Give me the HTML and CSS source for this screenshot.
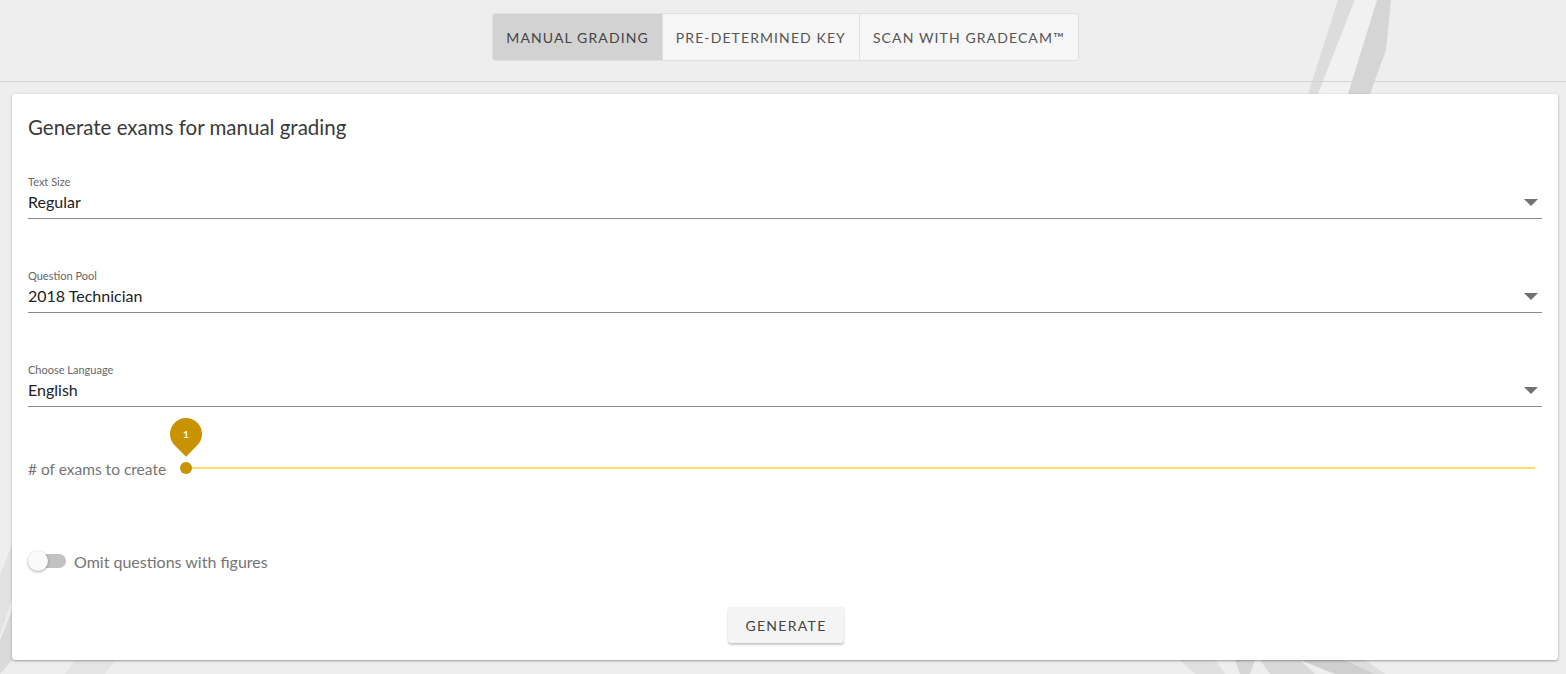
FILE: index.html
```html
<!DOCTYPE html>
<html>
<head>
<meta charset="utf-8">
<link rel="stylesheet" href="styles.css">
</head>
<body>
<svg class="bg-art" width="1566" height="674" viewBox="0 0 1566 674">
  <polygon points="1338,0 1355,0 1318,94 1308,94" fill="#dcdcdc"/>
  <polygon points="1355,0 1377,0 1348,94 1318,94" fill="#f1f1f1"/>
  <polygon points="1377,0 1391,0 1386,50 1370,94 1348,94" fill="#d5d5d5"/>
  <polygon points="1180,660 1215,660 1225,674 1195,674" fill="#e0e0e0"/>
  <polygon points="1235,660 1255,660 1250,674 1240,674" fill="#d6d6d6"/>
  <polygon points="1260,660 1300,660 1315,674 1270,674" fill="#d9d9d9"/>
  <polygon points="1300,660 1345,660 1375,674 1335,674" fill="#cfcfcf"/>
  <polygon points="1345,660 1365,660 1385,674 1375,674" fill="#dedede"/>
  <polygon points="0,575 12,545 12,600 0,635" fill="#e2e2e2"/>
  <polygon points="0,640 12,610 12,660 0,674" fill="#dadada"/>
  <polygon points="75,660 115,660 105,674 65,674" fill="#e4e4e4"/>
</svg>
<div class="page">
  <header class="header">
    <div class="tabs">
      <div class="tab active">Manual Grading</div>
      <div class="tab">Pre-Determined Key</div>
      <div class="tab">Scan with GradeCam™</div>
    </div>
  </header>
  <main class="card">
    <h1 class="title">Generate exams for manual grading</h1>

    <div class="field first">
      <div class="label">Text Size</div>
      <div class="select"><span class="value">Regular</span><span class="caret"></span></div>
    </div>
    <div class="field">
      <div class="label">Question Pool</div>
      <div class="select"><span class="value">2018 Technician</span><span class="caret"></span></div>
    </div>
    <div class="field">
      <div class="label">Choose Language</div>
      <div class="select"><span class="value">English</span><span class="caret"></span></div>
    </div>

    <div class="slider-row">
      <span class="slider-label"># of exams to create</span>
      <div class="slider">
        <div class="track"></div>
        <div class="thumb"></div>
        <div class="pin"><span>1</span></div>
      </div>
    </div>

    <div class="toggle-row">
      <div class="toggle"><div class="toggle-track"></div><div class="toggle-thumb"></div></div>
      <span class="toggle-label">Omit questions with figures</span>
    </div>

    <div class="actions">
      <button class="btn">Generate</button>
    </div>
  </main>
</div>
</body>
</html>
```

FILE: styles.css
```css
* { box-sizing: border-box; }
html, body { margin: 0; padding: 0; }
body {
  background: #eeeeee;
  font-family: Lato, "Open Sans", "Liberation Sans", sans-serif;
  color: #333;
  width: 1566px;
  height: 674px;
  overflow: hidden;
  position: relative;
}
.bg-art {
  position: absolute;
  left: 0;
  top: 0;
  z-index: 0;
}
.page {
  position: relative;
  z-index: 1;
}
.header {
  height: 82px;
  border-bottom: 1px solid #d4d4d4;
  display: flex;
  justify-content: center;
  padding-top: 13px;
}
.tabs {
  display: flex;
  height: 48px;
  border: 1px solid #e0e0e0;
  border-radius: 3px;
  background: #f6f6f6;
  overflow: hidden;
  margin-left: 5px;
}
.tab {
  display: flex;
  align-items: center;
  padding: 0 13px;
  font-size: 14px;
  letter-spacing: 1.1px;
  text-transform: uppercase;
  color: #555;
  border-left: 1px solid #e0e0e0;
}
.tab:first-child { border-left: none; }
.tab.active { background: #d2d2d2; color: #444; }

.card {
  margin: 12px 8px 0 12px;
  background: #fff;
  border-radius: 3px;
  box-shadow: 0 1px 3px rgba(0,0,0,0.25), 0 1px 1px rgba(0,0,0,0.12);
  padding: 21px 16px 16px 16px;
  height: 566px;
}
.title {
  margin: 0;
  font-size: 20.5px;
  font-weight: 400;
  line-height: 24px;
  color: #3a3a3a;
}
.field { margin-top: 50px; }
.field.first { margin-top: 36px; }
.label {
  font-size: 11px;
  line-height: 14px;
  color: #666;
}
.select {
  display: flex;
  justify-content: space-between;
  align-items: center;
  margin-top: 3px;
  height: 27px;
  padding-bottom: 6px;
  border-bottom: 1px solid #8a8a8a;
}
.value {
  font-size: 16px;
  line-height: 20px;
  color: #222;
}
.caret {
  width: 0;
  height: 0;
  border-left: 7px solid transparent;
  border-right: 7px solid transparent;
  border-top: 7px solid #717171;
  margin-right: 4px;
}
.slider-row {
  margin-top: 49px;
  height: 24px;
  display: flex;
  align-items: center;
}
.slider-label {
  font-size: 15.5px;
  color: #757575;
  margin-top: 1px;
}
.slider {
  position: relative;
  flex: 1;
  height: 24px;
  margin-left: 14px;
  margin-right: 7px;
}
.track {
  position: absolute;
  left: 0;
  right: 0;
  top: 11px;
  height: 2px;
  background: #fcdf62;
}
.thumb {
  position: absolute;
  left: 0;
  top: 6px;
  width: 12px;
  height: 12px;
  border-radius: 50%;
  background: #c89200;
}
.pin {
  position: absolute;
  left: -10px;
  top: -38px;
  width: 32px;
  height: 32px;
  border-radius: 50% 50% 0 50%;
  transform: rotate(45deg);
  background: #c89200;
  display: flex;
  align-items: center;
  justify-content: center;
}
.pin span {
  transform: rotate(-45deg);
  color: #fff;
  font-size: 10px;
  font-weight: 700;
}
.toggle-row {
  margin-top: 71px;
  height: 20px;
  display: flex;
  align-items: center;
}
.toggle {
  position: relative;
  width: 38px;
  height: 20px;
}
.toggle-track {
  position: absolute;
  left: 2px;
  right: 0;
  top: 3px;
  height: 14px;
  border-radius: 7px;
  background: #c2c2c2;
}
.toggle-thumb {
  position: absolute;
  left: 0;
  top: 0;
  width: 20px;
  height: 20px;
  border-radius: 50%;
  background: #fafafa;
  box-shadow: 0 1px 3px rgba(0,0,0,0.35);
}
.toggle-label {
  margin-left: 8px;
  font-size: 16px;
  color: #757575;
}
.actions {
  display: flex;
  justify-content: center;
  margin-top: 36px;
}
.btn {
  height: 36px;
  width: 116px;
  border: none;
  border-radius: 3px;
  background: #f4f4f4;
  box-shadow: 0 2px 2px rgba(0,0,0,0.2), 0 0 1px rgba(0,0,0,0.15);
  font-family: Lato, "Open Sans", "Liberation Sans", sans-serif;
  font-size: 14px;
  letter-spacing: 1.3px;
  text-transform: uppercase;
  color: #444;
  margin-left: 2px;
}
```
